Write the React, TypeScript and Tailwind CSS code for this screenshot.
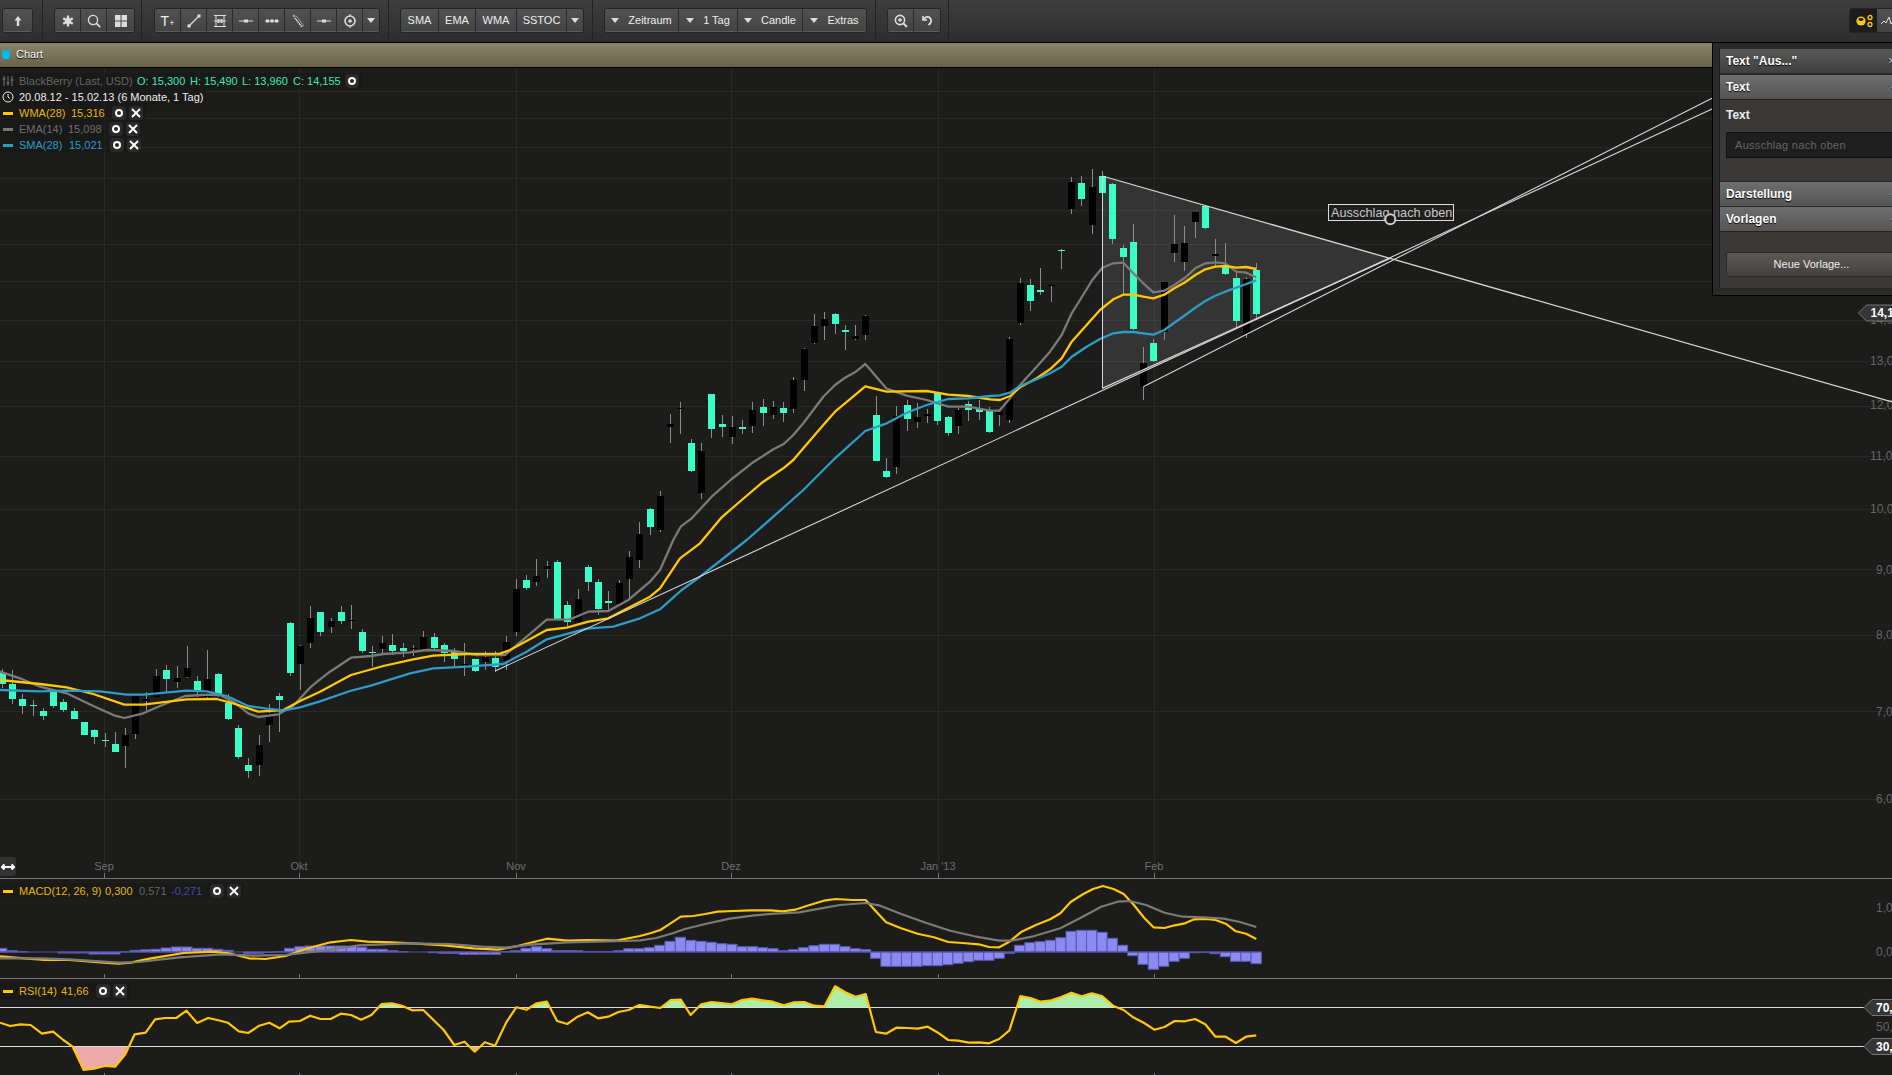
import type { ReactNode } from "react";

type P = [number, number];

// points were read off zoomed crops, so each run carries its crop origin and scale
const crop = (ox: number, oy: number, sx: number, sy: number, flat: number[]): P[] => {
  const out: P[] = [];
  for (let i = 0; i < flat.length; i += 2) out.push([ox + flat[i] / sx, oy + flat[i + 1] / sy]);
  return out;
};

const join = (...parts: P[][]): string => {
  const out: P[] = [];
  for (const part of parts) {
    for (const q of part) {
      if (!out.length || q[0] > out[out.length - 1][0]) out.push(q);
    }
  }
  return out.map((q) => `${q[0].toFixed(1)},${q[1].toFixed(1)}`).join(" ");
};

const greyLine = join(
  crop(0, 620, 3, 3, [0, 155, 60, 175, 120, 200, 200, 220, 280, 258, 345, 287, 373, 294, 430, 280, 480, 258, 555, 228, 620, 224, 660, 225, 700, 245, 745, 280, 775, 291, 835, 283, 880, 257, 930, 203, 960, 178]),
  crop(300, 540, 3, 3, [90, 395, 153, 353, 214, 348, 250, 342, 330, 337, 380, 330, 460, 333, 530, 345, 615, 345, 680, 290, 740, 239, 810, 238, 865, 215, 925, 213, 985, 180, 1050, 125, 1080, 90, 1120, 0]),
  crop(640, 300, 3, 3, [122, 680, 155, 655, 215, 590, 275, 537, 335, 490, 400, 448, 430, 433, 460, 405, 490, 370, 550, 290, 585, 255, 615, 233, 645, 217, 676, 192, 740, 266, 800, 287, 860, 300, 925, 320, 985, 320, 1050, 332, 1078, 332, 1110, 295, 1140, 255, 1190, 200, 1230, 155, 1265, 105, 1295, 40, 1320, 0]),
  crop(1000, 160, 3, 3, [277, 360, 307, 323, 340, 310, 370, 308, 400, 340, 430, 370, 460, 397, 493, 392, 523, 375, 553, 355, 586, 325, 616, 310, 646, 307, 676, 310, 709, 335, 739, 338, 769, 352]),
);

const yellowLine = join(
  crop(0, 620, 3, 3, [0, 180, 120, 192, 200, 202, 280, 222, 373, 254, 430, 254, 560, 238, 650, 237, 700, 250, 775, 275, 850, 270, 900, 243, 960, 215]),
  crop(300, 540, 3, 3, [153, 405, 250, 378, 340, 358, 400, 347, 500, 342, 600, 341, 630, 330, 740, 270, 800, 263, 865, 245, 925, 235, 1050, 170, 1080, 145, 1140, 55, 1200, 10]),
  crop(640, 300, 3, 3, [245, 652, 305, 600, 370, 545, 430, 505, 460, 480, 490, 445, 550, 375, 585, 335, 615, 310, 676, 259, 740, 275, 860, 273, 925, 284, 985, 288, 1050, 298, 1080, 300, 1110, 288, 1140, 262, 1190, 235, 1230, 208, 1265, 175, 1295, 125, 1380, 30]),
  crop(1000, 160, 3, 3, [340, 418, 370, 404, 400, 404, 430, 410, 460, 415, 493, 404, 523, 385, 553, 368, 586, 345, 616, 328, 646, 320, 676, 318, 709, 323, 739, 321, 769, 327]),
);

const blueLine = join(
  crop(0, 620, 3, 3, [0, 210, 120, 214, 200, 212, 300, 214, 380, 224, 430, 224, 560, 212, 620, 214, 680, 228, 745, 258, 800, 266, 850, 271, 900, 262, 960, 244]),
  crop(300, 540, 3, 3, [150, 453, 215, 436, 330, 400, 400, 385, 500, 380, 610, 372, 680, 335, 740, 298, 860, 266, 940, 260, 1020, 235, 1080, 208, 1145, 150, 1200, 110]),
  crop(640, 300, 3, 3, [320, 720, 400, 650, 490, 570, 585, 475, 676, 393, 740, 370, 800, 338, 860, 315, 925, 297, 985, 295, 1050, 288, 1080, 286, 1110, 278, 1140, 258, 1190, 238, 1230, 220, 1265, 200, 1295, 170, 1340, 140, 1380, 117]),
  crop(1000, 160, 3, 3, [340, 520, 370, 516, 400, 516, 430, 520, 460, 524, 493, 510, 523, 488, 553, 467, 586, 443, 616, 423, 646, 407, 676, 395, 709, 383, 739, 372, 769, 361]),
);

const macdLine = join(
  crop(0, 840, 2.45, 3, [0, 349, 60, 355, 110, 360, 170, 360, 230, 366, 290, 371, 320, 368, 370, 355, 450, 339, 520, 335, 560, 340, 610, 355, 650, 357, 700, 348, 750, 326, 810, 307, 860, 300, 900, 305, 960, 307, 1010, 310, 1090, 316, 1160, 325, 1220, 329, 1260, 320, 1340, 296, 1390, 302, 1440, 300, 1510, 302]),
  crop(640, 870, 2.45, 3, [0, 198, 25, 190, 50, 180, 75, 160, 100, 140, 130, 138, 160, 132, 190, 125, 230, 123, 270, 121, 320, 121, 350, 124, 380, 119, 410, 107, 450, 92, 480, 87, 520, 90, 553, 90, 575, 120, 603, 157, 640, 175, 680, 191, 720, 202, 755, 216, 790, 219, 830, 223, 855, 231, 880, 232, 905, 215, 935, 185, 970, 165, 1005, 148, 1030, 130, 1055, 96, 1085, 73, 1110, 57, 1134, 48, 1160, 57, 1185, 72, 1210, 105, 1235, 143, 1258, 172, 1285, 174, 1310, 166, 1335, 160, 1358, 148, 1385, 147, 1410, 150, 1435, 161, 1460, 184, 1485, 191, 1510, 207]),
);

const signalLine = join(
  crop(0, 840, 2.45, 3, [0, 355, 100, 355, 170, 358, 290, 368, 340, 366, 440, 352, 540, 343, 620, 347, 700, 345, 790, 332, 880, 316, 1000, 310, 1100, 312, 1180, 320, 1240, 323, 1300, 314, 1390, 307, 1530, 303]),
  crop(640, 870, 2.45, 3, [0, 211, 40, 204, 80, 190, 110, 177, 160, 162, 220, 146, 280, 136, 330, 131, 390, 127, 440, 116, 490, 105, 553, 99, 585, 106, 640, 132, 700, 158, 760, 182, 820, 199, 880, 212, 910, 212, 960, 200, 1030, 175, 1080, 143, 1130, 110, 1170, 95, 1200, 93, 1240, 105, 1285, 128, 1330, 140, 1380, 142, 1430, 146, 1470, 156, 1510, 171]),
);

const rsiLine = join(
  crop(0, 840, 2.45, 3, [0, 548, 25, 558, 50, 553, 75, 555, 103, 581, 130, 575, 155, 600, 178, 620, 205, 690, 230, 686, 257, 678, 282, 680, 307, 643, 330, 583, 357, 578, 380, 538, 405, 534, 432, 534, 457, 512, 483, 549, 510, 534, 535, 541, 558, 548, 585, 574, 608, 579, 635, 557, 660, 548, 685, 565, 708, 545, 735, 543, 760, 527, 785, 537, 810, 537, 835, 521, 860, 525, 885, 539, 910, 525, 935, 492, 960, 490, 985, 497, 1010, 511, 1037, 510, 1062, 540, 1087, 570, 1113, 615, 1138, 605, 1163, 635, 1188, 607, 1213, 617, 1240, 548, 1265, 502, 1290, 509, 1315, 490, 1340, 485, 1365, 543, 1390, 552, 1415, 530, 1440, 517, 1465, 535, 1490, 530, 1515, 516, 1540, 510, 1566, 495]),
  crop(640, 870, 2.45, 3, [0, 405, 25, 410, 50, 414, 75, 390, 100, 389, 124, 435, 150, 403, 175, 396, 200, 399, 225, 403, 250, 390, 275, 386, 300, 391, 325, 395, 352, 406, 377, 397, 402, 396, 427, 407, 452, 409, 478, 349, 503, 367, 528, 380, 553, 372, 578, 486, 603, 491, 628, 473, 655, 474, 680, 476, 705, 470, 730, 488, 755, 510, 780, 512, 805, 518, 830, 517, 855, 520, 880, 507, 905, 481, 932, 378, 957, 384, 982, 395, 1008, 391, 1032, 381, 1057, 368, 1082, 379, 1107, 370, 1132, 378, 1160, 408, 1185, 420, 1208, 442, 1235, 459, 1260, 479, 1285, 471, 1310, 453, 1335, 454, 1360, 447, 1385, 463, 1410, 500, 1435, 500, 1460, 519, 1485, 500, 1510, 496]),
);

// [wick top, body top, body bottom, wick bottom, green]
type Row = [number, number, number, number, number];
const rows = (oy: number, list: Row[]) =>
  list.map((r) => ({ hi: oy + r[0] / 3, top: oy + r[1] / 3, bot: oy + r[2] / 3, lo: oy + r[3] / 3, up: r[4] === 1 }));

const candles = [
  ...rows(620, [
    [148, 160, 192, 205, 1], [150, 192, 237, 252, 1], [222, 238, 258, 282, 1], [240, 255, 258, 288, 1], [265, 273, 288, 300, 1],
    [210, 213, 258, 263, 1], [237, 246, 270, 275, 1], [265, 273, 297, 298, 1], [305, 306, 345, 345, 1], [328, 330, 351, 372, 1],
    [340, 360, 363, 380, 1], [335, 372, 396, 396, 1], [323, 345, 378, 444, 0], [228, 228, 342, 357, 0], [215, 238, 243, 276, 0],
    [147, 168, 230, 230, 0], [135, 150, 177, 218, 1], [138, 174, 186, 205, 0], [78, 144, 171, 174, 0], [168, 183, 213, 232, 1],
    [90, 177, 232, 235, 0], [160, 162, 225, 230, 1], [222, 249, 297, 300, 1], [315, 324, 411, 417, 1], [414, 435, 453, 474, 1],
    [345, 375, 435, 468, 0], [252, 280, 315, 366, 0], [219, 228, 240, 336, 1], [5, 9, 159, 168, 1], [75, 78, 132, 210, 0],
  ]),
  ...rows(540, [
    [198, 235, 308, 323, 0], [216, 216, 276, 288, 1], [235, 244, 261, 279, 0], [198, 216, 243, 251, 1], [195, 240, 243, 266, 0],
    [268, 276, 333, 339, 1], [318, 336, 339, 381, 1], [288, 309, 327, 340, 0], [282, 315, 333, 345, 1], [309, 324, 333, 350, 1],
    [315, 324, 327, 348, 0], [273, 291, 327, 330, 0], [279, 291, 324, 330, 1], [309, 315, 340, 366, 1], [324, 336, 357, 382, 1],
    [309, 372, 376, 408, 0], [357, 357, 393, 396, 1], [333, 351, 366, 390, 0], [333, 354, 381, 396, 1], [288, 306, 363, 390, 0],
    [117, 147, 276, 288, 0], [105, 120, 144, 150, 1], [57, 108, 126, 138, 0], [63, 78, 87, 114, 0], [60, 66, 237, 240, 1],
    [183, 195, 246, 258, 1], [147, 177, 246, 246, 0], [75, 81, 126, 153, 1], [117, 126, 207, 225, 1], [153, 183, 189, 210, 1],
    [120, 129, 192, 192, 0], [33, 51, 117, 177, 0], [-54, -18, 60, 84, 0],
  ]),
  ...rows(300, [
    [623, 627, 681, 705, 1], [573, 588, 690, 695, 0], [343, 373, 380, 428, 0], [307, 323, 326, 402, 0], [417, 430, 512, 515, 1],
    [430, 454, 578, 596, 0], [282, 283, 388, 414, 1], [345, 372, 380, 410, 1], [348, 382, 410, 432, 0], [360, 381, 386, 402, 1],
    [307, 331, 378, 399, 0], [297, 321, 339, 378, 1], [303, 321, 345, 357, 0], [306, 324, 339, 366, 1], [232, 241, 326, 339, 0],
    [145, 148, 240, 272, 0], [42, 79, 129, 132, 0], [36, 58, 78, 120, 0], [40, 42, 72, 102, 1], [75, 90, 95, 150, 1],
    [75, 108, 117, 120, 0], [45, 49, 105, 120, 0], [288, 345, 483, 484, 1], [474, 513, 531, 533, 1], [318, 348, 501, 522, 0],
    [300, 315, 357, 393, 1], [309, 351, 366, 384, 0], [327, 343, 347, 369, 0], [276, 277, 363, 375, 1], [348, 351, 399, 408, 1],
    [324, 330, 378, 402, 0], [303, 312, 330, 363, 1], [300, 324, 336, 360, 1], [321, 333, 396, 399, 1], [330, 336, 345, 378, 0],
    [112, 117, 360, 369, 0],
  ]),
  ...rows(160, [
    [355, 369, 489, 494, 0], [357, 375, 423, 453, 1], [324, 390, 396, 404, 1], [375, 375, 378, 426, 0], [266, 270, 273, 327, 1],
    [50, 66, 147, 162, 0], [48, 69, 117, 138, 1], [27, 81, 195, 222, 0], [33, 48, 99, 100, 1], [68, 72, 237, 252, 1],
    [255, 264, 291, 405, 1], [192, 246, 507, 510, 1], [561, 609, 681, 720, 0], [537, 549, 603, 606, 1], [365, 366, 516, 540, 0],
    [165, 252, 279, 306, 0], [198, 249, 306, 333, 0], [156, 156, 186, 234, 0], [135, 138, 204, 207, 1], [237, 283, 288, 320, 0],
    [249, 318, 342, 345, 1], [340, 354, 483, 503, 1], [350, 357, 525, 533, 0], [309, 330, 462, 480, 1],
  ]),
];

const hist = [
  3.7, 1.3, 0.5, 0, 0, 0, -1, -1, -1, -2, -2, -2, 0.3, 1.7, 2.2, 2.7, 4, 5, 5, 3.7, 3.7, 2.7, 1.7, 0, -1.3, -1.3, -0.5, 0.3, 3.7, 5.3, 6, 6, 6, 6, 5.5, 4.7, 2.7, 2.7, 1.3, 0.3, 0, 0, -0.7, -1.3, -1.3, -2.3, -2.3, -2.3, -2.3, 0.3, 1.3, 3.7, 5.3, 3.3, 1.3, 1.3, 1.3, 0.3, 0.3, 0.3, 1.3, 3.3,
  3.3, 4.3, 6.7, 10.7, 14.7, 11.7, 10.7, 9.7, 8.3, 7.7, 5.3, 5.3, 4.3, 3.3, 1.3, 2.3, 4.3, 6.3, 7.7, 7.7, 5.3, 3.3, 2.3, -6.3, -14.3, -14.3, -14.3, -14.3, -13.7, -13.7, -12.7, -11.3, -9.7, -8.3, -8.3, -6.3, -1.3, 6.7, 9.3, 10.3, 11.7, 14.3, 20.7, 21.7, 21.7, 19.7, 13.7, 6.7, -3.7, -12.3, -17.3, -14.3, -9.3, -6.3, -0.7, -0.3, -1.7, -4.7, -9.3, -9.3, -11.7,
];

const candleX = (i: number) => 1.7 + 10.283 * i;

const gridY = [91, 118, 147, 178, 210, 244, 281, 320, 361, 406, 456, 509, 569, 635, 711, 799];
const gridX = [104, 299, 516, 731, 938, 1154];
const months = ["Sep", "Okt", "Nov", "Dez", "Jan '13", "Feb"];
const priceLabels: [string, number, number][] = [
  ["14,00", 1870, 324],
  ["13,00", 1870, 365],
  ["12,00", 1870, 409],
  ["11,00", 1870, 460],
  ["10,00", 1870, 513],
  ["9,00", 1876, 574],
  ["8,00", 1876, 639],
  ["7,00", 1876, 716],
  ["6,00", 1876, 803],
];

function Tag({ y, tip, label }: { y: number; tip: number; label: string }) {
  const left = tip + 8;
  return (
    <g>
      <polygon points={`${tip},${y} ${left},${y - 8} 1900,${y - 8} 1900,${y + 8} ${left},${y + 8}`} fill="#353535" stroke="#777" />
      <text x={left + 4} y={y + 4} fill="#fff" fontSize="12" fontWeight="700">
        {label}
      </text>
    </g>
  );
}

function MainChart() {
  return (
    <svg className="absolute inset-0 h-full w-full" viewBox="0 68 1892 810">
      {gridY.map((y) => (
        <line key={y} x1="0" x2="1892" y1={y + 0.5} y2={y + 0.5} stroke="#282827" />
      ))}
      {gridX.map((x) => (
        <g key={x}>
          <line x1={x + 0.5} x2={x + 0.5} y1="68" y2="873" stroke="#282827" />
          <line x1={x + 0.5} x2={x + 0.5} y1="873" y2="878" stroke="#777" />
        </g>
      ))}
      {months.map((m, i) => (
        <text key={m} x={gridX[i]} y="870" fill="#6e6e6e" fontSize="11" textAnchor="middle">
          {m}
        </text>
      ))}
      {priceLabels.map(([label, x, y]) => (
        <text key={label} x={x} y={y} fill="#666" fontSize="12">
          {label}
        </text>
      ))}

      <polygon points="1102.3,176 1390,258.3 1102.3,388.3" fill="#fff" fillOpacity="0.11" />

      <g shapeRendering="crispEdges">
        {candles.map((c, i) => {
          const x = Math.round(candleX(i));
          return (
            <g key={i}>
              <rect x={x} y={c.hi} width="1" height={c.lo - c.hi} fill="#8c8c8c" />
              <rect x={x - 3} y={c.top} width="7" height={Math.max(c.bot - c.top, 1)} fill={c.up ? "#3bfdc8" : "#000"} />
            </g>
          );
        })}
      </g>

      <g fill="none" strokeWidth="2.3" strokeLinejoin="round">
        <polyline points={greyLine} stroke="#7b7a78" />
        <polyline points={yellowLine} stroke="#ffc800" />
        <polyline points={blueLine} stroke="#2e9cc4" />
      </g>

      <g fill="none" stroke="#d6d6d6">
        <line x1="1102.5" y1="176" x2="1102.5" y2="388.3" />
        <line x1="1102.3" y1="176" x2="1892" y2="402" strokeWidth="1.3" />
        <line x1="1102.3" y1="388.3" x2="1390" y2="258.3" strokeWidth="1.3" />
        <line x1="495" y1="671" x2="1712" y2="109" strokeWidth="1.1" />
        <line x1="1143.3" y1="386.7" x2="1712" y2="98.3" strokeWidth="1.1" />
      </g>

      <rect x="1328.5" y="204.5" width="125" height="16" fill="#1f1f1f" stroke="#ddd" />
      <text x="1331" y="216.5" fill="#c8c8c8" fontSize="12.7">
        Ausschlag nach oben
      </text>
      <circle cx="1390.3" cy="219.3" r="5" fill="#1c1c1b" stroke="#ccc" strokeWidth="2" />

      <Tag y={313} tip={1858.5} label="14,155" />
    </svg>
  );
}

function MacdChart() {
  return (
    <svg className="absolute inset-0 h-full w-full" viewBox="0 879 1892 99">
      {gridX.map((x) => (
        <line key={x} x1={x + 0.5} x2={x + 0.5} y1="974" y2="978" stroke="#777" />
      ))}
      <text x="1876" y="912" fill="#666" fontSize="12">
        1,00
      </text>
      <text x="1876" y="956" fill="#666" fontSize="12">
        0,00
      </text>
      {hist.map((h, i) => (
        <rect
          key={i}
          x={candleX(i) - 5.14}
          y={h > 0 ? 952 - h : 952}
          width="10.28"
          height={Math.abs(h)}
          fill="#8a8af0"
          stroke="#5a5ab4"
        />
      ))}
      <line x1="0" x2="1260" y1="952" y2="952" stroke="#5151a8" />
      <g fill="none" strokeWidth="2.2" strokeLinejoin="round">
        <polyline points={macdLine} stroke="#ffc800" />
        <polyline points={signalLine} stroke="#7b7a78" />
      </g>
    </svg>
  );
}

function RsiChart() {
  return (
    <svg className="absolute inset-0 h-full w-full" viewBox="0 979 1892 96">
      <defs>
        <clipPath id="over">
          <rect x="0" y="979" width="1892" height="28" />
        </clipPath>
        <clipPath id="under">
          <rect x="0" y="1047" width="1892" height="28" />
        </clipPath>
      </defs>
      {gridX.map((x) => (
        <line key={x} x1={x + 0.5} x2={x + 0.5} y1="1073" y2="1075" stroke="#777" />
      ))}
      <polygon points={`0,1007 ${rsiLine} 1256,1007`} fill="#aaeeaa" clipPath="url(#over)" />
      <polygon points={`0,1046 ${rsiLine} 1256,1046`} fill="#eeaaaa" clipPath="url(#under)" />
      <line x1="0" x2="1864" y1="1007.5" y2="1007.5" stroke="#dcdcdc" />
      <line x1="0" x2="1864" y1="1046.5" y2="1046.5" stroke="#dcdcdc" />
      <polyline points={rsiLine} fill="none" stroke="#ffc800" strokeWidth="2.2" strokeLinejoin="round" />
      <text x="1876" y="1031" fill="#666" fontSize="12">
        50,00
      </text>
      <Tag y={1007.5} tip={1864} label="70,00" />
      <Tag y={1046.5} tip={1864} label="30,00" />
    </svg>
  );
}

function Ring() {
  return (
    <span className="flex h-[14px] w-[14px] items-center justify-center rounded-sm bg-[#2a2a2a]">
      <span className="h-[8px] w-[8px] rounded-full border-2 border-white" />
    </span>
  );
}

function Cross() {
  return (
    <span className="flex h-[14px] w-[14px] items-center justify-center rounded-sm bg-[#2a2a2a]">
      <svg width="10" height="10" viewBox="0 0 10 10" stroke="#fff" strokeWidth="2">
        <path d="M1 1l8 8M9 1l-8 8" />
      </svg>
    </span>
  );
}

function Dash({ color }: { color: string }) {
  return <span className={`mx-[3px] h-[3px] w-[10px] ${color}`} />;
}

function LegendRow({ children, className }: { children: ReactNode; className: string }) {
  return <div className={`flex h-4 items-center text-[11px] bg-[#181818]/60 ${className}`}>{children}</div>;
}

function Legend() {
  return (
    <div className="absolute left-0 top-[5px] flex flex-col">
      <LegendRow className="w-[362px]">
        <svg className="ml-[2px] w-[12px]" height="12" viewBox="0 0 12 12" stroke="#777" fill="none">
          <path d="M2 1v10M6 1v10M10 1v10M.5 4h3M4.5 8h3M8.5 5h3" />
        </svg>
        <span className="ml-[5px] w-[118px] text-[#666]">BlackBerry (Last, USD)</span>
        <span className="w-[53px] text-[#3be8bc]">O: 15,300</span>
        <span className="w-[52px] text-[#3be8bc]">H: 15,490</span>
        <span className="w-[51px] text-[#3be8bc]">L: 13,960</span>
        <span className="w-[52px] text-[#3be8bc]">C: 14,155</span>
        <Ring />
      </LegendRow>
      <LegendRow className="w-[206px]">
        <svg className="ml-[2px] w-[12px]" height="12" viewBox="0 0 12 12" stroke="#eee" fill="none">
          <circle cx="6" cy="6" r="5" />
          <path d="M6 3v3l2 1.5" />
        </svg>
        <span className="ml-[5px] text-[#eee]">20.08.12 - 15.02.13 (6 Monate, 1 Tag)</span>
      </LegendRow>
      <LegendRow className="w-[146px]">
        <Dash color="bg-[#ffc800]" />
        <span className="ml-[3px] w-[52px] text-[#e8b800]">WMA(28)</span>
        <span className="w-[41px] text-[#e8b800]">15,316</span>
        <span className="flex gap-[3px]">
          <Ring />
          <Cross />
        </span>
      </LegendRow>
      <LegendRow className="w-[141px]">
        <Dash color="bg-[#7b7a78]" />
        <span className="ml-[3px] w-[49px] text-[#6e6e6e]">EMA(14)</span>
        <span className="w-[41px] text-[#6e6e6e]">15,098</span>
        <span className="flex gap-[3px]">
          <Ring />
          <Cross />
        </span>
      </LegendRow>
      <LegendRow className="w-[141px]">
        <Dash color="bg-[#2e9cc4]" />
        <span className="ml-[3px] w-[50px] text-[#2a9cc4]">SMA(28)</span>
        <span className="w-[41px] text-[#2a9cc4]">15,021</span>
        <span className="flex gap-[3px]">
          <Ring />
          <Cross />
        </span>
      </LegendRow>
    </div>
  );
}

function ToolIcon({ children }: { children: ReactNode }) {
  return (
    <svg width="16" height="16" viewBox="0 0 16 16" fill="none" stroke="#ddd" strokeWidth="1.3">
      {children}
    </svg>
  );
}

const Caret = () => <span className="h-0 w-0 border-x-[4px] border-t-[5px] border-x-transparent border-t-[#ddd]" />;

function Btn({ w, children }: { w: string; children: ReactNode }) {
  return (
    <div className={`flex h-full items-center justify-center gap-[9px] border-r border-[#2c2c2c] last:border-r-0 bg-linear-to-b from-[#525252] to-[#434343] text-[11px] text-[#eee] shadow-[inset_0_-1px_0_#5c5c5c] ${w}`}>
      {children}
    </div>
  );
}

function Group({ children, className = "" }: { children: ReactNode; className?: string }) {
  return (
    <div className={`flex h-[25px] shrink-0 overflow-hidden rounded-[3px] border border-[#252525] ${className}`}>
      {children}
    </div>
  );
}

function Section({ w, pl, children }: { w: string; pl: string; children: ReactNode }) {
  return <div className={`flex h-full shrink-0 items-center border-r border-[#222] pb-px ${w} ${pl}`}>{children}</div>;
}

function Toolbar() {
  return (
    <div className="flex h-[42px] shrink-0 bg-linear-to-b from-[#3e3e3e] to-[#2e2e2e]">
      <Section w="w-[43px]" pl="pl-[2px]">
        <Group>
          <Btn w="w-[29px]">
            <ToolIcon>
              <path d="M8 13V6" strokeWidth="2.4" />
              <path d="M4.500 7.500 8 3l3.500 4.500z" fill="#ddd" stroke="none" />
            </ToolIcon>
          </Btn>
        </Group>
      </Section>
      <Section w="w-[99px]" pl="pl-[11px]">
        <Group>
          <Btn w="w-[26px]">
            <ToolIcon>
              <path d="M8 2.500v11M3.200 5.200l9.600 5.600M12.800 5.200l-9.600 5.600" strokeWidth="2.4" />
              <circle cx="8" cy="8" r="3" fill="#ddd" stroke="none" />
            </ToolIcon>
          </Btn>
          <Btn w="w-[26px]">
            <ToolIcon>
              <circle cx="7" cy="7" r="4.600" />
              <path d="M10.200 10.200l4 4" strokeWidth="1.800" />
            </ToolIcon>
          </Btn>
          <Btn w="w-[27px]">
            <svg width="14" height="14" viewBox="0 0 14 14" fill="#ddd">
              <path d="M1 1h5.500v5.500H1zM7.500 1H13v5.500H7.500zM1 7.500h5.500V13H1zM7.500 7.500H13V13H7.500z" />
            </svg>
          </Btn>
        </Group>
      </Section>
      <Section w="w-[247px]" pl="pl-[12px]">
        <Group>
          <Btn w="w-[26px]">
            <span className="text-[14px] leading-none">
              T<span className="text-[9px]">+</span>
            </span>
          </Btn>
          <Btn w="w-[26px]">
            <ToolIcon>
              <path d="M3 13 13 3" />
              <rect x="1.500" y="11.500" width="3" height="3" fill="#ddd" stroke="none" />
              <rect x="11.500" y="1.500" width="3" height="3" fill="#ddd" stroke="none" />
            </ToolIcon>
          </Btn>
          <Btn w="w-[26px]">
            <ToolIcon>
              <path d="M2 2.500h12M2 13.500h12M4 2.500v11M12 2.500v11M2 8h12" strokeWidth="1" />
              <path d="M6.500 6v4M9.500 6v4" strokeWidth="2" />
            </ToolIcon>
          </Btn>
          <Btn w="w-[26px]">
            <ToolIcon>
              <path d="M1 8h14" strokeWidth="1" />
              <rect x="6" y="6.500" width="4" height="3" fill="#ddd" stroke="none" />
            </ToolIcon>
          </Btn>
          <Btn w="w-[26px]">
            <ToolIcon>
              <path d="M1 8h14" strokeWidth="1" />
              <rect x="2" y="6.500" width="3" height="3" fill="#ddd" stroke="none" />
              <rect x="6.500" y="6.500" width="3" height="3" fill="#ddd" stroke="none" />
              <rect x="11" y="6.500" width="3" height="3" fill="#ddd" stroke="none" />
            </ToolIcon>
          </Btn>
          <Btn w="w-[26px]">
            <ToolIcon>
              <path d="M3 2l3.500 1.500 7 9-2 1.500-7-9z" strokeWidth="1" strokeDasharray="1.500 1" />
              <path d="M5 5l7 8.500" strokeWidth="1" />
            </ToolIcon>
          </Btn>
          <Btn w="w-[26px]">
            <ToolIcon>
              <path d="M1 8h14" strokeWidth="1" />
              <rect x="6" y="6.500" width="4" height="3" fill="#ddd" stroke="none" />
            </ToolIcon>
          </Btn>
          <Btn w="w-[26px]">
            <ToolIcon>
              <circle cx="8" cy="8" r="5" strokeWidth="1.600" />
              <circle cx="8" cy="8" r="1.800" fill="#ddd" stroke="none" />
              <path d="M8 1v2M8 13v2" strokeWidth="1" />
            </ToolIcon>
          </Btn>
          <Btn w="w-[16px]">
            <Caret />
          </Btn>
        </Group>
      </Section>
      <Section w="w-[204px]" pl="pl-[11px]">
        <Group>
          <Btn w="w-[38px]">SMA</Btn>
          <Btn w="w-[37px]">EMA</Btn>
          <Btn w="w-[41px]">WMA</Btn>
          <Btn w="w-[50px]">SSTOC</Btn>
          <Btn w="w-[16px]">
            <Caret />
          </Btn>
        </Group>
      </Section>
      <Section w="w-[283px]" pl="pl-[11px]">
        <Group>
          <Btn w="w-[74px]">
            <Caret />
            Zeitraum
          </Btn>
          <Btn w="w-[59px]">
            <Caret />1 Tag
          </Btn>
          <Btn w="w-[65px]">
            <Caret />
            Candle
          </Btn>
          <Btn w="w-[63px]">
            <Caret />
            Extras
          </Btn>
        </Group>
      </Section>
      <Section w="w-[73px]" pl="pl-[11px]">
        <Group>
          <Btn w="w-[26px]">
            <ToolIcon>
              <circle cx="7" cy="7" r="4.600" strokeWidth="1.600" />
              <circle cx="7" cy="7" r="1.800" fill="#ddd" stroke="none" />
              <path d="M10.500 10.500l3.500 3.500" strokeWidth="2" />
            </ToolIcon>
          </Btn>
          <Btn w="w-[26px]">
            <ToolIcon>
              <path d="M4 3v4h4" strokeWidth="1.600" />
              <path d="M4 7c1.500-3 5-4 7-2s1.500 5-1.500 7" strokeWidth="1.800" />
            </ToolIcon>
          </Btn>
        </Group>
      </Section>
      <div className="ml-auto flex h-full w-[43px] items-center overflow-hidden pb-px">
        <Group className="w-[60px]">
          <div className="flex h-full w-[27px] shrink-0 items-center justify-center bg-[#1c1c1c]">
            <svg width="18" height="14" viewBox="0 0 18 14" fill="#ffc800">
              <circle cx="6" cy="7" r="4.600" />
              <circle cx="15" cy="3.500" r="2" fill="none" stroke="#ffc800" strokeWidth="1.300" />
              <circle cx="15" cy="10.500" r="2" fill="none" stroke="#ffc800" strokeWidth="1.300" />
              <ellipse cx="6" cy="5.500" rx="2.600" ry="1.400" fill="#1c1c1c" />
            </svg>
          </div>
          <div className="flex h-full w-[32px] shrink-0 items-center bg-linear-to-b from-[#525252] to-[#434343] pl-[4px]">
            <svg width="20" height="12" viewBox="0 0 20 12" fill="none" stroke="#ddd">
              <path d="M0 9l3-3 2 2 3-6 2 7 3-4 3 3 4-2" />
            </svg>
          </div>
        </Group>
      </div>
    </div>
  );
}

function PanelHeader({ title, sign, light }: { title: string; sign: string; light?: boolean }) {
  return (
    <div
      className={`flex h-[24px] items-center justify-between pl-[6px] pr-[26px] text-[12px] font-bold text-white [text-shadow:0_1px_1px_#000] bg-linear-to-b ${
        light ? "from-[#6e6e6e] to-[#555]" : "from-[#585858] to-[#404040]"
      }`}
    >
      <span>{title}</span>
      <span className="font-normal text-[#ccc]">{sign}</span>
    </div>
  );
}

function SidePanel() {
  return (
    <div className="absolute left-[1712px] top-[42px] h-[254px] w-[210px] border border-black bg-[#2a2a2a] pl-[6px] pt-[6px]">
      <div className="flex flex-col border-l border-[#1a1a1a]">
        <PanelHeader title={'Text "Aus..."'} sign="×" />
        <div className="mt-[2px]">
          <PanelHeader title="Text" sign="-" light />
        </div>
        <div className="h-[82px] border-t border-[#222] bg-[#3a3938] pl-[6px] pt-[9px]">
          <div className="text-[12px] font-bold leading-[13px] text-[#eee]">Text</div>
          <div className="mt-[10px] flex h-[26px] w-[200px] items-center border border-[#111] bg-[#1e1e1e] pl-[8px] text-[11px] tracking-[0.3px] text-[#666]">
            Ausschlag nach oben
          </div>
        </div>
        <div className="mt-[1px]">
          <PanelHeader title="Darstellung" sign="-" light />
        </div>
        <div className="mt-[1px]">
          <PanelHeader title="Vorlagen" sign="-" light />
        </div>
        <div className="h-[57px] border-t border-[#222] bg-[#3a3938] pl-[6px] pt-[20px]">
          <div className="flex h-[25px] w-[171px] items-center justify-center rounded-[3px] border border-[#2a2a2a] bg-linear-to-b from-[#5b5856] to-[#444240] text-[11px] text-[#eee]">
            Neue Vorlage...
          </div>
        </div>
      </div>
    </div>
  );
}

export default function App() {
  return (
    <div className="relative flex h-screen w-full flex-col overflow-hidden bg-[#1c1c1b] font-['Liberation_Sans',Arial,sans-serif]">
      <Toolbar />
      <div className="flex h-[26px] shrink-0 items-center border-y border-black bg-linear-to-b from-[#8b8569] to-[#67624a] pb-px pl-[2px] text-[11px] text-white [text-shadow:0_1px_1px_#000]">
        <span className="h-[9px] w-[8px] rounded-[2px] bg-[#00b8f0]" />
        <span className="ml-[6px]">Chart</span>
      </div>

      <div className="relative h-[810px] shrink-0">
        <MainChart />
        <Legend />
        <div className="absolute bottom-[2px] left-0 flex h-[19px] w-[16px] items-center justify-center rounded-r-sm bg-[#333]">
          <svg width="14" height="8" viewBox="0 0 14 8" fill="none" stroke="#fff" strokeWidth="2">
            <path d="M1 4h12M3.500 1.500 1 4l2.500 2.500M10.500 1.500 13 4l-2.500 2.500" />
          </svg>
        </div>
      </div>

      <div className="relative h-[100px] shrink-0 border-t border-[#777]">
        <MacdChart />
        <LegendRow className="absolute left-0 top-[4px] w-[244px]">
          <Dash color="bg-[#ffc800]" />
          <span className="ml-[3px] w-[86px] text-[#e8b800]">MACD(12, 26, 9)</span>
          <span className="w-[34px] text-[#e8b800]">0,300</span>
          <span className="w-[32px] text-[#666]">0,571</span>
          <span className="w-[39px] text-[#4a4aaa]">-0,271</span>
          <span className="flex gap-[3px]">
            <Ring />
            <Cross />
          </span>
        </LegendRow>
      </div>

      <div className="relative flex-1 border-t border-[#777]">
        <RsiChart />
        <LegendRow className="absolute left-0 top-[4px] w-[130px]">
          <Dash color="bg-[#ffc800]" />
          <span className="ml-[3px] w-[42px] text-[#e8b800]">RSI(14)</span>
          <span className="w-[35px] text-[#e8b800]">41,66</span>
          <span className="flex gap-[3px]">
            <Ring />
            <Cross />
          </span>
        </LegendRow>
      </div>

      <SidePanel />
    </div>
  );
}
